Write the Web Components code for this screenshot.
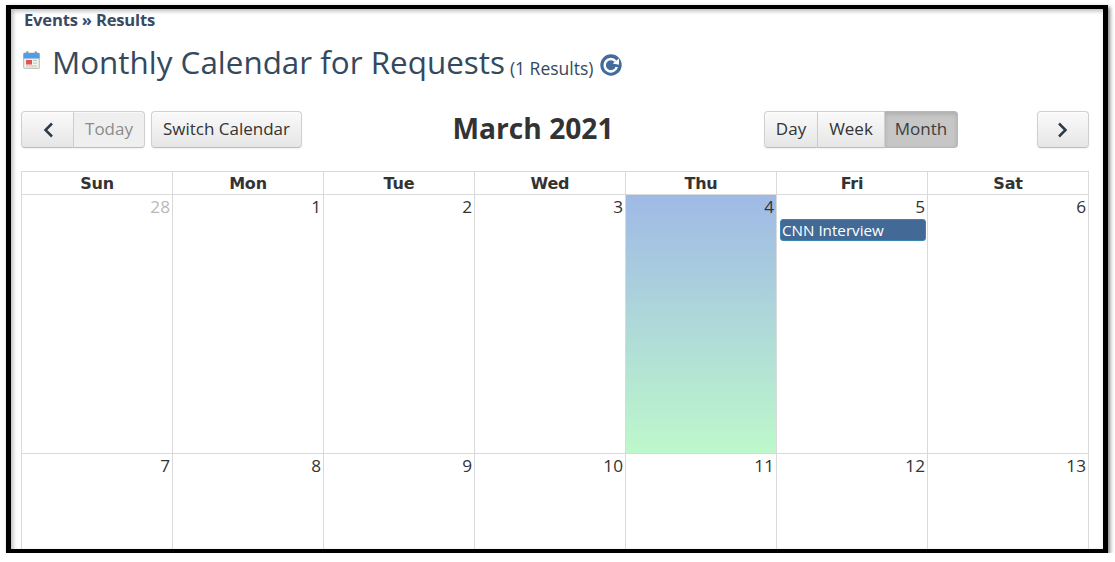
<!DOCTYPE html>
<html><head><meta charset="utf-8">
<style>html,body{margin:0;padding:0;background:#fff;overflow:hidden}body{font-family:"Open Sans",sans-serif;color:#333}</style>
</head><body>
<app-frame>
  <page-head></page-head>
  <cal-toolbar></cal-toolbar>
  <month-grid></month-grid>
</app-frame>
<script>
const def=(n,html,init)=>customElements.define(n,class extends HTMLElement{constructor(){super();this.attachShadow({mode:'open'}).innerHTML=html;}connectedCallback(){init&&init(this,this.shadowRoot)}});
def('app-frame',`<style>:host{display:block;box-sizing:border-box;width:1102px;height:548px;margin:5px 0 0 6px;border:5px solid #000;border-top-width:4px;border-bottom-width:4px;background:#fff;box-shadow:2px 2px 4px rgba(0,0,0,.5),inset 2px 2px 4px rgba(0,0,0,.28);overflow:hidden}
.in{height:100%;overflow:hidden;display:flex;flex-direction:column}</style><div class="in"><slot></slot></div>`);
def('page-head',`<style>:host{display:block;padding:2px 0 0 13px;height:102px;box-sizing:border-box;color:#34495e;flex:none}
.bc{font:bold 16.6px/18px "Open Sans",sans-serif;color:#3a4a62;letter-spacing:-.2px}
.row{display:flex;align-items:flex-start;margin-top:11px;height:44px}
svg.cal{margin:11px 12px 0 -1px;flex:none}
h1{margin:0;font:400 31.4px/44px "Open Sans",sans-serif;color:#34495e;white-space:nowrap}
.n{font:400 17.5px/22px "Open Sans",sans-serif;margin:17px 0 0 5px;color:#34495e;white-space:nowrap}
svg.r{margin:14px 0 0 7px;flex:none}</style>
<div class="bc">Events » Results</div>
<div class="row">
<svg class="cal" width="17" height="18" viewBox="0 0 17 18"><rect x=".5" y="2" width="16" height="15.5" rx="1" fill="#e6e6df" stroke="#a8a8a0" stroke-width=".6"/><path d="M.5 3a1 1 0 0 1 1-1h14a1 1 0 0 1 1 1v4.5H.5z" fill="#4f9de6"/><rect x="3" y=".3" width="2.4" height="4" rx="1.1" fill="#6d9cc4"/><rect x="11.6" y=".3" width="2.4" height="4" rx="1.1" fill="#6d9cc4"/><rect x="2" y="8.5" width="13" height="7.5" fill="#f4f3ee"/><rect x="3" y="9" width="6" height="4.5" fill="#e2524e"/><path d="M10 9.5h4M10 12h4M3 15h11" stroke="#b5b5ad" stroke-width=".8"/></svg>
<h1>Monthly Calendar for Requests</h1><span class="n">(1 Results)</span>
<svg class="r" width="22" height="22" viewBox="0 0 22 22"><circle cx="11" cy="11" r="10.7" fill="#426c9b"/><path d="M15.6 7.2A6.2 6.2 0 1 0 16.8 13" fill="none" stroke="#fff" stroke-width="2.5"/><path d="M12.6 9.6L19 4.6V10.8z" fill="#fff"/></svg>
</div>`);
def('cal-btn',`<style>:host{display:flex;align-items:center;justify-content:center;box-sizing:border-box;height:37px;padding-bottom:2px;font:400 17px/20px "Open Sans",sans-serif;color:#333;background:linear-gradient(#fafafa,#e6e6e6);border:1px solid #d0d0d0;border-bottom-color:#bdbdbd;white-space:nowrap;box-shadow:inset 0 1px 0 rgba(255,255,255,.6),0 1px 2px rgba(0,0,0,.06)}
:host([first]){border-radius:4px 0 0 4px}:host([last]){border-radius:0 4px 4px 0;border-left:0}:host([solo]){border-radius:4px}
:host([dim]){color:#8c8c8c;background:#efefef}
:host([on]){background:#c6c6c6;color:#3d3d3d;border-color:#b8b8b8;box-shadow:inset 0 2px 4px rgba(0,0,0,.13)}
:host([mid]){border-left:0}</style><slot></slot>`);
def('cal-toolbar',`<style>:host{display:grid;grid-template-columns:281px 1fr 194px 79px 52px;height:37px;margin-left:10px;width:1068px;flex:none;align-items:start}
.g{display:flex}h2{margin:0;font:700 28.2px/34px "Open Sans",sans-serif;color:#333;text-align:center;white-space:nowrap}
svg{display:block;margin-top:2px}</style>
<div class="g"><cal-btn first style="width:53px"><svg width="12" height="16" viewBox="0 0 12 16"><path d="M10 1.5L3.5 8l6.5 6.5" fill="none" stroke="#2f3a48" stroke-width="2.5"/></svg></cal-btn><cal-btn last dim style="width:71px">Today</cal-btn><cal-btn solo style="width:151px;margin-left:6px">Switch Calendar</cal-btn></div>
<h2>March 2021</h2>
<div class="g"><cal-btn first style="width:54px">Day</cal-btn><cal-btn mid style="width:67px">Week</cal-btn><cal-btn last on style="width:73px">Month</cal-btn></div>
<div></div>
<cal-btn solo style="width:52px"><svg width="12" height="16" viewBox="0 0 12 16"><path d="M2 1.5L8.5 8 2 14.5" fill="none" stroke="#2f3a48" stroke-width="2.5"/></svg></cal-btn>`);
def('month-grid',`<style>:host{display:grid;grid-template-columns:repeat(6,151px) 161px;grid-template-rows:24px 259px 120px;margin:23px 0 0 10px;width:1068px;border-left:1px solid #d9d9d9;box-sizing:border-box;flex:none;font-family:"Open Sans",sans-serif}
.h{box-sizing:border-box;border:1px solid #dadada;border-left:0;text-align:center;font:700 16px/23px "DejaVu Sans",sans-serif;color:#333;letter-spacing:-.2px}
.d{box-sizing:border-box;border-right:1px solid #d9d9d9;border-bottom:1px solid #d9d9d9;text-align:right;font:400 17.2px/22px "Open Sans",sans-serif;padding:1px 2px 0 0;color:#333;min-width:0}
.o{color:#b9b9b9}.t{background:linear-gradient(#9fb9e6,#bdf8cb)}.l{border-bottom:0}
.e{display:block;box-sizing:border-box;margin:1px -1px 0 3px;height:22px;background:#436a97;border:1px solid #3a87ad;border-radius:3px;color:#fff;text-align:left;font:400 15.2px/20px "Open Sans",sans-serif;padding-left:1px;white-space:nowrap;overflow:hidden}</style>
<div class="h">Sun</div><div class="h">Mon</div><div class="h">Tue</div><div class="h">Wed</div><div class="h">Thu</div><div class="h">Fri</div><div class="h">Sat</div>
<div class="d o">28</div><div class="d">1</div><div class="d">2</div><div class="d">3</div><div class="d t">4</div><div class="d">5<span class="e">CNN Interview</span></div><div class="d">6</div>
<div class="d l">7</div><div class="d l">8</div><div class="d l">9</div><div class="d l">10</div><div class="d l">11</div><div class="d l">12</div><div class="d l">13</div>`);
</script>
</body></html>
